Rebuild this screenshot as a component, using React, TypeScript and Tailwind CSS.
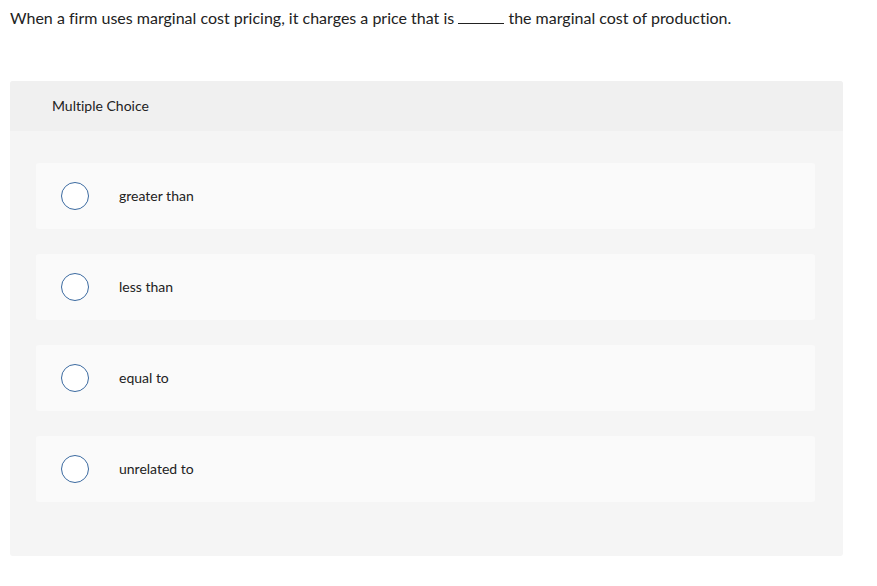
import React from 'react';

const options = ['greater than', 'less than', 'equal to', 'unrelated to'];

export default function App() {
  return (
    <div
      className="w-[877px] h-[586px] bg-white text-[#222] [font-variant-ligatures:none]"
      style={{ fontFamily: 'Lato, "Open Sans", sans-serif' }}
    >
      <p className="pl-[10px] pt-[8px] text-[16px] leading-[20px]">
        When a firm uses marginal cost pricing, it charges a price that is{' '}
        <span className="inline-block w-[46px] border-b border-[#222] align-baseline"></span>{' '}
        the marginal cost of production.
      </p>

      <div className="mt-[53px] ml-[10px] w-[833px] h-[475px] rounded-[3px] bg-[#f5f5f5] flex flex-col">
        <div className="h-[50px] bg-[#f0f0f0] rounded-t-[3px] flex items-center pl-[42px] pb-[2px] text-[14px]">
          Multiple Choice
        </div>
        <div className="flex flex-col gap-[25px] pt-[32px] pl-[26px] pr-[28px]">
          {options.map((o) => (
            <div key={o} className="h-[66px] rounded-[3px] bg-[#fafafa] flex items-center">
              <span className="ml-[25px] w-[28px] h-[28px] rounded-full border border-[#3b6aa0] bg-white"></span>
              <span className="ml-[30px] pb-[2px] text-[14px]">{o}</span>
            </div>
          ))}
        </div>
      </div>
    </div>
  );
}
